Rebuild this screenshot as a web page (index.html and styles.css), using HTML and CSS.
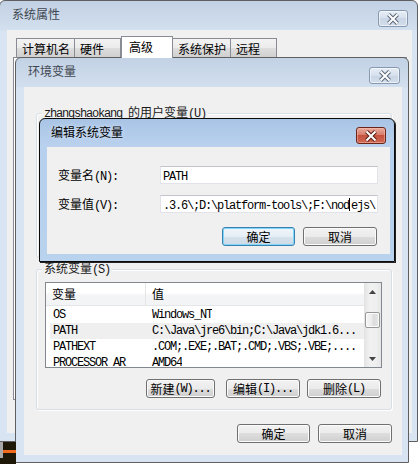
FILE: index.html
```html
<!DOCTYPE html>
<html lang="zh-CN">
<head>
<meta charset="utf-8">
<title>系统属性</title>
<link rel="stylesheet" href="styles.css">
</head>
<body>
<div class="desk">

  <div class="win inactive win-outer">
    <div class="titlebar">
      <span class="title t-outer">系统属性</span>
      <span class="closebtn close-outer">
        <svg width="14" height="12" viewBox="0 0 14 12"><path d="M2.5 1.5 L11.5 10.5 M11.5 1.5 L2.5 10.5" stroke="#5b6779" stroke-width="4" fill="none"/><path d="M2.5 1.5 L11.5 10.5 M11.5 1.5 L2.5 10.5" stroke="#fff" stroke-width="2" fill="none"/></svg>
      </span>
    </div>
    <div class="client outer-client">
      <div class="tabs">
        <div class="tab">计算机名</div>
        <div class="tab">硬件</div>
        <div class="tab sel">高级</div>
        <div class="tab">系统保护</div>
        <div class="tab">远程</div>
      </div>
      <div class="tabpanel"></div>
    </div>
  </div>

  <div class="win inactive win-env">
    <div class="titlebar">
      <span class="title t-env">环境变量</span>
      <span class="closebtn close-env">
        <svg width="14" height="12" viewBox="0 0 14 12"><path d="M2.5 1.5 L11.5 10.5 M11.5 1.5 L2.5 10.5" stroke="#5b6779" stroke-width="4" fill="none"/><path d="M2.5 1.5 L11.5 10.5 M11.5 1.5 L2.5 10.5" stroke="#fff" stroke-width="2" fill="none"/></svg>
      </span>
    </div>
    <div class="client env-client">
      <div class="group user-group">
        <span class="glabel"><span class="m">zhangshaokang </span>的用户变量<span class="m">(U)</span></span>
      </div>
      <div class="group sys-group">
        <span class="glabel">系统变量<span class="m">(S)</span></span>
        <div class="list">
          <div class="list-body">
            <div class="lhead">
              <div class="hc hc1">变量</div>
              <div class="hc hc2">值</div>
            </div>
            <div class="rows">
              <div class="row"><span class="c1 m">OS</span><span class="c2 m">Windows_NT</span></div>
              <div class="row hl"><span class="c1 m">PATH</span><span class="c2 m">C:\Java\jre6\bin;C:\Java\jdk1.6...</span></div>
              <div class="row"><span class="c1 m">PATHEXT</span><span class="c2 m">.COM;.EXE;.BAT;.CMD;.VBS;.VBE;....</span></div>
              <div class="row"><span class="c1 m">PROCESSOR_AR</span><span class="c2 m">AMD64</span></div>
            </div>
          </div>
          <div class="vscroll">
            <div class="sarrow"><svg width="7" height="4" viewBox="0 0 7 4"><path d="M0 4 L3.5 0 L7 4 Z" fill="#444"/></svg></div>
            <div class="thumb"></div>
            <div class="sfill"></div>
            <div class="sarrow"><svg width="7" height="4" viewBox="0 0 7 4"><path d="M0 0 L7 0 L3.5 4 Z" fill="#444"/></svg></div>
          </div>
        </div>
        <div class="btnrow">
          <div class="btn b-new">新建<span class="m">(W)...</span></div>
          <div class="btn b-edit">编辑<span class="m">(I)...</span></div>
          <div class="btn b-del">删除<span class="m">(L)</span></div>
        </div>
      </div>
      <div class="btnrow okrow">
        <div class="btn b-ok">确定</div>
        <div class="btn b-cancel">取消</div>
      </div>
    </div>
  </div>

  <div class="win active win-edit">
    <div class="titlebar">
      <span class="title t-edit">编辑系统变量</span>
      <span class="closebtn close-red">
        <svg width="14" height="12" viewBox="0 0 14 12"><path d="M2.5 1.5 L11.5 10.5 M11.5 1.5 L2.5 10.5" stroke="#5a1e14" stroke-width="4" fill="none"/><path d="M2.5 1.5 L11.5 10.5 M11.5 1.5 L2.5 10.5" stroke="#fff" stroke-width="2" fill="none"/></svg>
      </span>
    </div>
    <div class="client edit-client">
      <div class="frow">
        <span class="flabel">变量名<span class="m">(N):</span></span>
        <div class="input"><span class="m">PATH</span></div>
      </div>
      <div class="frow frow2">
        <span class="flabel">变量值<span class="m">(V):</span></span>
        <div class="input"><span class="m">.3.6\;D:\platform-tools\;F:\nod<span class="caret"></span>ejs\</span></div>
      </div>
      <div class="btnrow editbtns">
        <div class="btn default b-eok">确定</div>
        <div class="btn b-ecancel">取消</div>
      </div>
    </div>
  </div>

  <div class="taskbit"><span class="tb-grey"></span><span class="tb-orange"></span></div>
</div>
</body>
</html>
```

FILE: styles.css
```css
* { box-sizing: border-box; margin: 0; padding: 0; }
html, body { width: 419px; height: 464px; overflow: hidden; }
body {
  background: #ffffff;
  font: 12px/16px "Noto Sans CJK SC", "Noto Sans", sans-serif;
  color: #000;
}
.m {
  font-family: "Liberation Mono", "DejaVu Sans Mono", monospace;
  font-size: 12px;
  letter-spacing: -1.2px;
}
.desk { position: relative; width: 419px; height: 464px; }

/* windows */
.win {
  position: absolute;
  display: flex;
  flex-direction: column;
  border: 1px solid #5f5f5f;
  border-radius: 6px 6px 0 0;
}
.inactive { background: linear-gradient(#c2d1e4 0, #d2dfee 29px, #d8e4f2 30px, #d8e4f2 100%); }
.active { border-color: #0b0b0b; background: linear-gradient(#a8c4e5 0, #bad2ee 28px, #b6d0ed 29px, #b9d2ee 100%); }

.titlebar { display: flex; align-items: flex-start; flex: none; }
.title { padding-top: 5px; line-height: 16px; color: #3f4650; white-space: nowrap; }
.active .title { color: #000; }

.closebtn {
  margin-left: auto;
  display: flex; align-items: center; justify-content: center;
  height: 17px;
  border: 1px solid #8799b0;
  border-radius: 3px;
  background: linear-gradient(#e6edf6 0, #d6e0ed 50%, #c9d5e5 50%, #d3deeb 100%);
  box-shadow: inset 0 0 0 1px rgba(255,255,255,0.55);
}
.close-red {
  border-color: #6a2418;
  background: linear-gradient(#e9ab9b 0, #d77d6b 45%, #c5513d 50%, #cf6a56 100%);
  box-shadow: inset 0 0 0 1px rgba(255,200,190,0.45);
}

.client { flex: 1; background: #f0f0f0; }

/* outer: System Properties */
.win-outer { left: -1px; top: 0; width: 419px; height: 442px; padding: 0 5px 8px 7px; }
.win-outer .titlebar { height: 29px; }
.t-outer { padding-left: 5px; }
.close-outer { width: 30px; margin-top: 9px; margin-right: 4px; }
.outer-client { padding: 6px 0 0 6px; display: flex; flex-direction: column; }
.tabs { display: flex; align-items: flex-end; height: 21px; padding-left: 3px; }
.tab {
  height: 19px;
  min-width: 46px;
  padding: 1px 4px 0 5px;
  line-height: 17px;
  border: 1px solid #898c95;
  border-bottom: none;
  border-left-width: 1px;
  background: linear-gradient(#f3f3f3 0, #ebebeb 50%, #dedede 50%, #d0d0d0 100%);
  white-space: nowrap;
}
.tab + .tab { border-left: none; }
.tab.sel {
  height: 22px;
  min-width: 52px;
  margin-bottom: -1px;
  padding: 1px 4px 0 7px;
  background: #fff;
  border-left: 1px solid #898c95;
  position: relative;
  z-index: 1;
}
.tab.sel + .tab { border-left: none; }
.tabpanel { width: 394px; height: 343px; border: 1px solid #898c95; background: #fff; }

/* env window */
.win-env { left: 15px; top: 57px; width: 394px; height: 406px; padding: 0 6px 7px 8px; }
.win-env .titlebar { height: 29px; }
.t-env { padding-left: 4px; }
.close-env { width: 31px; margin-top: 9px; margin-right: 2px; }
.env-client { display: flex; flex-direction: column; padding: 26px 10px 0 12px; }

.group {
  position: relative;
  border: 1px solid #d5dfe5;
  border-radius: 3px;
  box-shadow: inset 1px 1px 0 #fff, 1px 1px 0 #fff;
}
.glabel {
  position: absolute; top: -10px; left: 5px;
  padding: 0 2px;
  background: #f0f0f0;
  line-height: 16px;
  color: #1a1a1a;
  white-space: nowrap;
}
.user-group { height: 145px; }
.sys-group { height: 141px; margin-top: 11px; padding: 12px 9px 0 8px; display: flex; flex-direction: column; }

.list { height: 86px; border: 1px solid #828790; background: #fff; display: flex; }
.list-body { flex: 1; overflow: hidden; }
.lhead { display: flex; height: 23px; background: linear-gradient(#ffffff 0, #ffffff 45%, #f4f5f7 55%, #f3f4f6 100%); border-bottom: 1px solid #e4e6e9; }
.hc { line-height: 22px; padding-left: 6px; white-space: nowrap; }
.hc1 { width: 100px; border-right: 1px solid #e3e5e7; }
.rows { padding: 1px 0 0 4px; }
.row { display: flex; height: 16px; line-height: 16px; white-space: nowrap; }
.row.hl { background: #efefef; }
.c1 { width: 99px; padding-left: 3px; flex: none; }
.c2 { padding-left: 3px; overflow: hidden; }

.vscroll {
  width: 17px; flex: none;
  display: flex; flex-direction: column;
  background: linear-gradient(90deg, #e3e3e3 0, #f1f1f1 35%, #efefef 70%, #e6e6e6 100%);
}
.sarrow { height: 17px; display: flex; align-items: center; justify-content: center; }
.thumb {
  height: 16px; margin: 12px 1px 0 1px;
  border: 1px solid #979797; border-radius: 2px;
  background: linear-gradient(90deg, #f4f4f4 0, #ececec 45%, #dcdcdc 55%, #e6e6e6 100%);
  box-shadow: inset 0 0 0 1px #fbfbfb;
}
.sfill { flex: 1; }

.btnrow { display: flex; justify-content: flex-end; }
.sys-group .btnrow { margin-top: 11px; margin-right: 1px; }
.btn {
  height: 19px;
  border: 1px solid #707070;
  border-radius: 3px;
  background: linear-gradient(#f2f2f2 0, #ebebeb 50%, #dddddd 50%, #cfcfcf 100%);
  box-shadow: inset 0 0 0 1px #fbfbfb;
  display: flex; align-items: center; justify-content: center;
  line-height: 16px;
  white-space: nowrap;
}
.b-new { width: 69px; }
.b-edit { width: 74px; margin-left: 11px; }
.b-del { width: 74px; margin-left: 7px; }
.okrow { margin-top: 14px; }
.b-ok { width: 73px; }
.b-cancel { width: 74px; margin-left: 8px; }

/* edit dialog */
.win-edit { left: 39px; top: 118px; width: 356px; height: 144px; padding: 0 4px 7px 7px; box-shadow: 1px 1px 0 #222; }
.win-edit .titlebar { height: 28px; }
.t-edit { padding-left: 4px; padding-top: 5px; text-shadow: 0 0 4px #e6f0fb; }
.close-red { width: 30px; margin-top: 8px; margin-right: 4px; }
.edit-client { padding: 18px 0 0 11px; display: flex; flex-direction: column; }
.frow { display: flex; align-items: center; }
.frow2 { margin-top: 9px; }
.flabel { width: 102px; flex: none; white-space: nowrap; padding-top: 2px; }
.input {
  width: 218px; height: 18px;
  border: 1px solid #e2e3ea; border-top-color: #c2c4ca;
  background: #fff;
  padding-left: 2px;
  line-height: 16px;
  white-space: nowrap; overflow: hidden;
}
.caret { display: inline-block; width: 0; height: 13px; border-left: 1px solid #000; margin-right: 1px; vertical-align: -2px; }
.editbtns { justify-content: flex-start; padding-left: 164px; margin-top: 13px; }
.b-eok { width: 73px; }
.b-ecancel { width: 74px; margin-left: 8px; }
.btn.default { border-color: #3c7fb1; box-shadow: inset 0 0 0 1px #7fd6f8; background: linear-gradient(#eef5fa 0, #e6eef5 50%, #d6e2ec 50%, #cddae6 100%); }

.taskbit { position: absolute; left: 0; top: 442px; width: 16px; height: 22px; background: #1d1808; }
.tb-grey { position: absolute; left: 0; top: 0; width: 3px; height: 16px; background: #a9a9a9; }
.tb-orange { position: absolute; left: 3px; top: 8px; width: 13px; height: 3px; background: #f26a1b; }
```
